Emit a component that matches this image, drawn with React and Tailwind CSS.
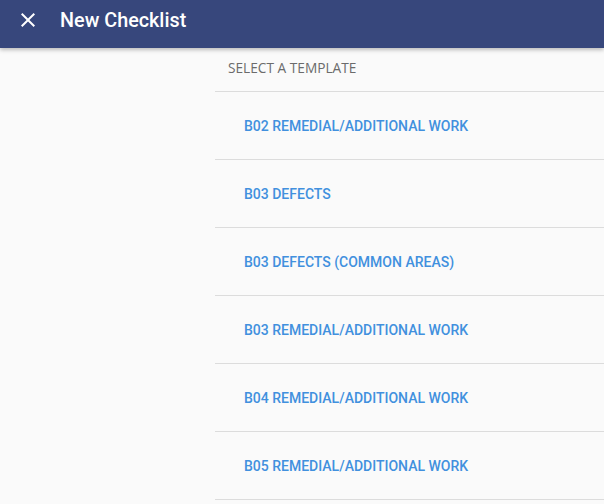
export default function App() {
  const items = [
    "B02 REMEDIAL/ADDITIONAL WORK",
    "B03 DEFECTS",
    "B03 DEFECTS (COMMON AREAS)",
    "B03 REMEDIAL/ADDITIONAL WORK",
    "B04 REMEDIAL/ADDITIONAL WORK",
    "B05 REMEDIAL/ADDITIONAL WORK",
  ];
  return (
    <div className="w-[604px] h-[504px] bg-[#fafafa] overflow-hidden flex flex-col" style={{ fontFamily: "Roboto, sans-serif" }}>
      <div className="h-[48px] shrink-0 bg-[#37477c] flex items-center shadow-[0_2px_4px_rgba(0,0,0,0.25)] relative z-10">
        <div className="w-[56px] flex items-center justify-center">
          <svg width="24" height="24" viewBox="0 0 24 24" className="-mt-[8px]" fill="white">
            <path d="M19 6.41L17.59 5 12 10.59 6.41 5 5 6.41 10.59 12 5 17.59 6.41 19 12 13.41 17.59 19 19 17.59 13.41 12z" />
          </svg>
        </div>
        <div className="text-white text-[19.8px] font-medium ml-[4px] -mt-[7px]">New Checklist</div>
      </div>
      <div className="flex-1 flex">
        <div className="w-[215px] shrink-0" />
        <div className="flex-1 flex flex-col">
          <div className="h-[43px] flex items-end pb-[12px] pl-[13px] text-[13.7px] text-[#6b6b6b]" style={{ fontFamily: "'Open Sans', sans-serif" }}>
            SELECT A TEMPLATE
          </div>
          {items.map((t) => (
            <div key={t} className="h-[68px] border-t border-[#dcdcdc] flex items-center pl-[29px] pt-[2px] text-[14px] font-medium text-[#4190de]">
              {t}
            </div>
          ))}
          <div className="border-t border-[#dcdcdc]" />
        </div>
      </div>
    </div>
  );
}
